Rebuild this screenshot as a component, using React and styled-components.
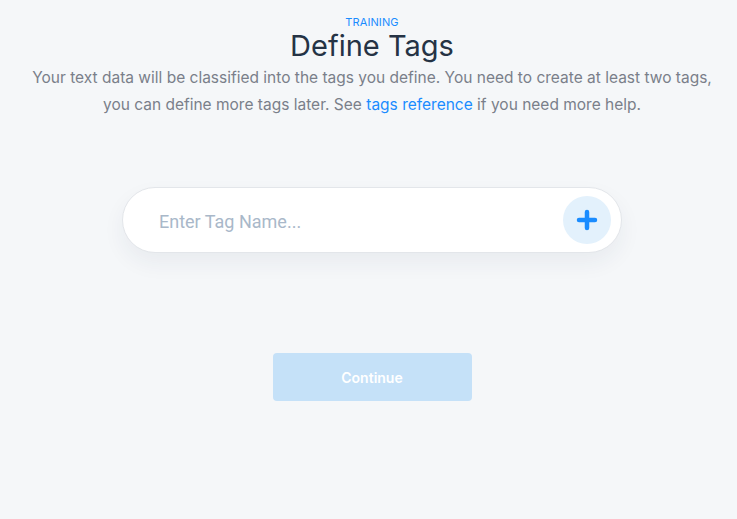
import React from "react";
import styled, { createGlobalStyle } from "styled-components";

const GlobalStyle = createGlobalStyle`
  html, body {
    margin: 0;
    padding: 0;
    background: #f5f7f9;
    font-family: Inter, "Noto Sans", sans-serif;
  }
  * { box-sizing: border-box; }
`;

const Page = styled.div`
  width: 100%;
  min-height: 519px;
  display: flex;
  flex-direction: column;
  align-items: center;
  padding: 16px 0 0 7px;
`;

const Eyebrow = styled.div`
  font-size: 11px;
  line-height: 13px;
  color: #1a8cff;
  text-transform: uppercase;
  letter-spacing: 0.1px;
`;

const Title = styled.h1`
  margin: 2px 0 0;
  font-size: 29px;
  font-weight: 400;
  line-height: 30px;
  color: #253345;
`;

const Lead = styled.p`
  margin: 3px 0 0;
  max-width: 700px;
  text-align: center;
  font-size: 15.5px;
  line-height: 27px;
  color: #7a7f8a;
`;

const Link = styled.a`
  color: #1a8cff;
  text-decoration: none;
`;

const TagForm = styled.div`
  margin-top: 69px;
  width: 500px;
  height: 66px;
  display: flex;
  align-items: center;
  justify-content: space-between;
  padding: 0 10px 0 36px;
  background: #fff;
  border: 1px solid #e3e6ea;
  border-radius: 33px;
  box-shadow: 0 10px 22px rgba(30, 50, 80, 0.06);
`;

const TagInput = styled.input`
  flex: 1;
  border: none;
  outline: none;
  background: transparent;
  font-family: Roboto, sans-serif;
  font-size: 18px;
  padding: 2px 0 0;
  color: #253345;
  &::placeholder {
    color: #a9b8c9;
  }
`;

const AddButton = styled.button`
  width: 48px;
  height: 48px;
  border-radius: 50%;
  border: none;
  background: #e3f1fc;
  display: flex;
  align-items: center;
  justify-content: center;
  padding: 0;
  cursor: pointer;
`;

const ContinueButton = styled.button`
  margin-top: 100px;
  width: 199px;
  height: 48px;
  border: none;
  border-radius: 4px;
  background: #c5e1f8;
  color: #fff;
  font-family: Inter, sans-serif;
  font-weight: 600;
  font-size: 14px;
`;

export default function App() {
  return (
    <>
      <GlobalStyle />
      <Page>
        <Eyebrow>Training</Eyebrow>
        <Title>Define Tags</Title>
        <Lead>
          Your text data will be classified into the tags you define. You need to create at least two tags,
          <br />
          you can define more tags later. See <Link href="#">tags reference</Link> if you need more help.
        </Lead>
        <TagForm>
          <TagInput placeholder="Enter Tag Name..." />
          <AddButton>
            <svg width="22" height="22" viewBox="0 0 22 22">
              <path d="M11 3v16M3 11h16" stroke="#1a8cff" strokeWidth="4.5" strokeLinecap="round" />
            </svg>
          </AddButton>
        </TagForm>
        <ContinueButton disabled>Continue</ContinueButton>
      </Page>
    </>
  );
}
